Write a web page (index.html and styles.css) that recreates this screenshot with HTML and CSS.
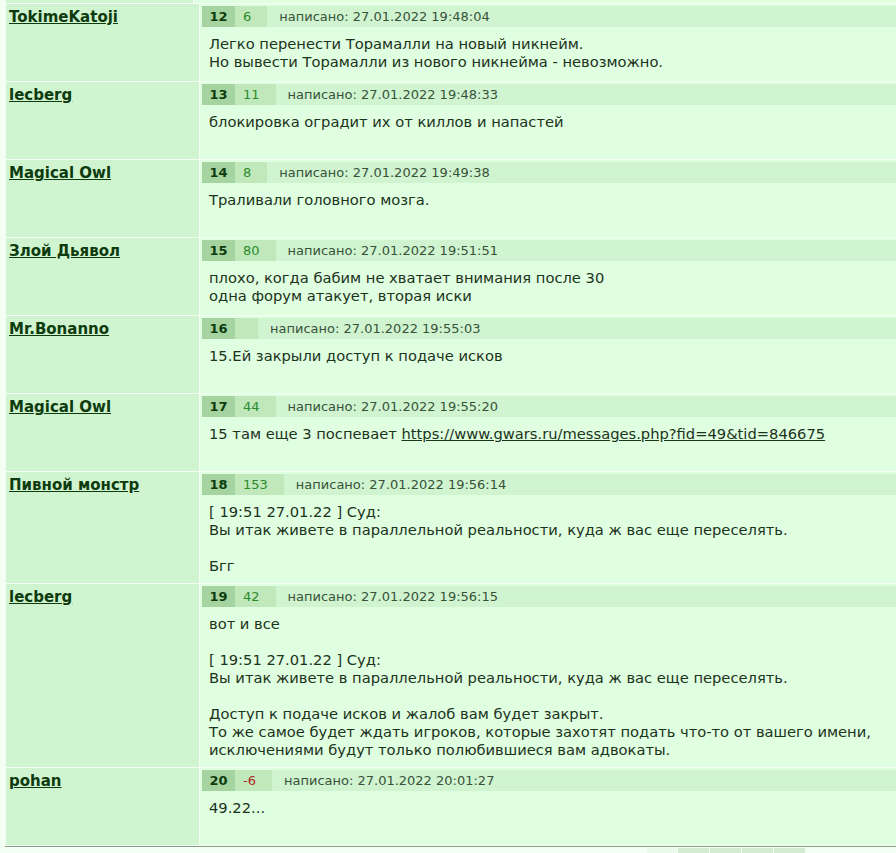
FILE: index.html
```html
<!DOCTYPE html>
<html>

<head>
    <meta charset="utf-8">
    <title>Форум</title>
    <link rel="stylesheet" href="styles.css">
</head>

<body>
    <div class="thread">
        <div class="post stub">
            <div class="author"></div>
            <div class="msg"></div>
        </div>

        <div class="post">
            <div class="author"><a href="#">TokimeKatoji</a></div>
            <div class="msg">
                <div class="msg-head"><span class="num">12</span><span class="rate">6</span><span class="date">написано: 27.01.2022 19:48:04</span></div>
                <div class="msg-text">Легко перенести Торамалли на новый никнейм.<br>Но вывести Торамалли из нового никнейма - невозможно.</div>
            </div>
        </div>

        <div class="post">
            <div class="author"><a href="#">lecberg</a></div>
            <div class="msg">
                <div class="msg-head"><span class="num">13</span><span class="rate">11</span><span class="date">написано: 27.01.2022 19:48:33</span></div>
                <div class="msg-text">блокировка оградит их от киллов и напастей</div>
            </div>
        </div>

        <div class="post">
            <div class="author"><a href="#">Magical Owl</a></div>
            <div class="msg">
                <div class="msg-head"><span class="num">14</span><span class="rate">8</span><span class="date">написано: 27.01.2022 19:49:38</span></div>
                <div class="msg-text">Траливали головного мозга.</div>
            </div>
        </div>

        <div class="post">
            <div class="author"><a href="#">Злой Дьявол</a></div>
            <div class="msg">
                <div class="msg-head"><span class="num">15</span><span class="rate">80</span><span class="date">написано: 27.01.2022 19:51:51</span></div>
                <div class="msg-text">плохо, когда бабим не хватает внимания после 30<br>одна форум атакует, вторая иски</div>
            </div>
        </div>

        <div class="post">
            <div class="author"><a href="#">Mr.Bonanno</a></div>
            <div class="msg">
                <div class="msg-head"><span class="num">16</span><span class="rate"></span><span class="date">написано: 27.01.2022 19:55:03</span></div>
                <div class="msg-text">15.Ей закрыли доступ к подаче исков</div>
            </div>
        </div>

        <div class="post">
            <div class="author"><a href="#">Magical Owl</a></div>
            <div class="msg">
                <div class="msg-head"><span class="num">17</span><span class="rate">44</span><span class="date">написано: 27.01.2022 19:55:20</span></div>
                <div class="msg-text">15 там еще 3 поспевает <a href="#">https://www.gwars.ru/messages.php?fid=49&amp;tid=846675</a></div>
            </div>
        </div>

        <div class="post">
            <div class="author"><a href="#">Пивной монстр</a></div>
            <div class="msg">
                <div class="msg-head"><span class="num">18</span><span class="rate">153</span><span class="date">написано: 27.01.2022 19:56:14</span></div>
                <div class="msg-text">[ 19:51 27.01.22 ] Суд:<br>Вы итак живете в параллельной реальности, куда ж вас еще переселять.<br><br>Бгг</div>
            </div>
        </div>

        <div class="post">
            <div class="author"><a href="#">lecberg</a></div>
            <div class="msg">
                <div class="msg-head"><span class="num">19</span><span class="rate">42</span><span class="date">написано: 27.01.2022 19:56:15</span></div>
                <div class="msg-text">вот и все<br><br>[ 19:51 27.01.22 ] Суд:<br>Вы итак живете в параллельной реальности, куда ж вас еще переселять.<br><br>Доступ к подаче исков и жалоб вам будет закрыт.<br>То же самое будет ждать игроков, которые захотят подать что-то от вашего имени,<br>исключениями будут только полюбившиеся вам адвокаты.</div>
            </div>
        </div>

        <div class="post">
            <div class="author"><a href="#">pohan</a></div>
            <div class="msg">
                <div class="msg-head"><span class="num">20</span><span class="rate minus">-6</span><span class="date">написано: 27.01.2022 20:01:27</span></div>
                <div class="msg-text">49.22...</div>
            </div>
        </div>
    </div>

    <div class="thread-end"></div>

    <div class="pager">
        <span class="page current"></span>
        <span class="page"></span>
        <span class="page"></span>
        <span class="page"></span>
        <span class="page"></span>
    </div>
</body>

</html>
```

FILE: styles.css
```css
html {
    overflow: hidden;
}

body {
    margin: 0;
    background: #f4fff4;
    font-family: "DejaVu Sans", Verdana, sans-serif;
    color: #1c331c;
}

.thread {
    display: flex;
    flex-direction: column;
    gap: 1px;
    margin-left: 6px;
    width: 894px;
}

.post {
    display: flex;
    gap: 1px;
    min-height: 77px;
}

.post.stub {
    min-height: 3px;
    height: 3px;
}

.author {
    flex: none;
    width: 187px;
    padding: 4px 3px 0;
    background: #d0f4d0;
    font-size: 15px;
    line-height: 18px;
    font-weight: bold;
}

.author a {
    color: #0d3b0d;
}

.msg {
    flex: 1;
    padding: 2px 2px 8px;
    background: #e0fee0;
}

.stub .author,
.stub .msg {
    padding: 0;
}

.msg-head {
    display: flex;
    height: 21px;
    background: #d0f4d0;
    font-size: 13px;
    line-height: 20px;
    color: #38523a;
}

.msg-head span {
    padding-top: 1px;
}

.num {
    width: 33px;
    text-align: center;
    background: #a6d4a0;
    font-weight: bold;
    color: #0d3d0d;
}

.rate {
    padding: 0 16px 0 8px;
    background: #c0e8bb;
    color: #2c8a2c;
}

.rate:empty {
    width: 23px;
    padding: 0;
}

.rate.minus {
    color: #b02a2a;
}

.msg-head .date {
    padding-left: 12px;
}

.msg-text {
    padding: 8px 7px 0;
    font-size: 14.7px;
    line-height: 18px;
}

.msg-text a {
    color: #1c331c;
}

.thread-end {
    margin: 1px 0 0 5px;
    border-top: 1px solid #8c9c8c;
}

.pager {
    display: flex;
    gap: 1px;
    margin: 1px 0 0 647px;
}

.page {
    width: 31px;
    height: 8px;
    background: #d2ecd2;
}

.page.current {
    width: 30px;
    background: #eafaea;
}
```
